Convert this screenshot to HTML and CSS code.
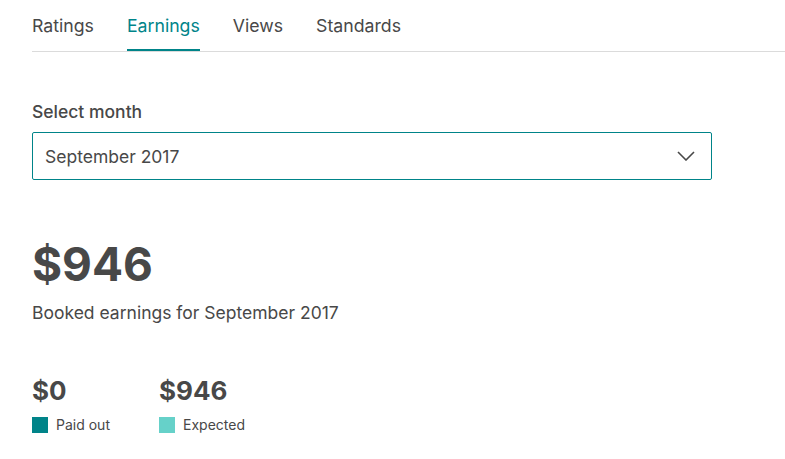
FILE: index.html
```html
<!DOCTYPE html>
<html lang="en">
<head>
  <meta charset="UTF-8">
  <title>Earnings</title>
  <link rel="stylesheet" href="styles.css">
</head>
<body>

  <nav class="tabs">
    <a class="tab">Ratings</a>
    <a class="tab active">Earnings</a>
    <a class="tab">Views</a>
    <a class="tab">Standards</a>
  </nav>

  <section class="month">
    <label class="label" for="monthSelect">Select month</label>
    <div class="select">
      <span id="monthSelect">September 2017</span>
      <svg class="chevron" width="18" height="10" viewBox="0 0 18 10">
        <path d="M1 1 L9 9 L17 1" fill="none" stroke="#484848" stroke-width="1.6"/>
      </svg>
    </div>
  </section>

  <section class="total">
    <div class="amount">$946</div>
    <p class="caption">Booked earnings for September 2017</p>
  </section>

  <section class="split">
    <div class="part">
      <div class="part-amount">$0</div>
      <div class="legend"><span class="swatch paid"></span>Paid out</div>
    </div>
    <div class="part">
      <div class="part-amount">$946</div>
      <div class="legend"><span class="swatch expected"></span>Expected</div>
    </div>
  </section>

</body>
</html>
```

FILE: styles.css
```css
body {
  margin: 0;
  padding: 0 0 0 32px;
  font-family: Inter, "Noto Sans", sans-serif;
  color: #484848;
  background: #fff;
}

.tabs {
  display: flex;
  gap: 33px;
  border-bottom: 1px solid #dbdbdb;
  height: 51px;
}

.tab {
  font-size: 17.7px;
  line-height: 51px;
  box-sizing: border-box;
  height: 51px;
}

.tab.active {
  color: #008489;
  border-bottom: 2px solid #008489;
}

.month {
  padding-top: 48px;
}

.label {
  display: block;
  font-size: 17.5px;
  font-weight: 500;
  line-height: 24px;
  margin-bottom: 8px;
}

.select {
  width: 680px;
  height: 48px;
  box-sizing: border-box;
  border: 1px solid #008489;
  border-radius: 2px;
  display: flex;
  align-items: center;
  justify-content: space-between;
  padding: 0 16px 0 12px;
  font-size: 17.5px;
}

.total {
  padding-top: 56px;
}

.amount {
  font-size: 46px;
  font-weight: 700;
  line-height: 56px;
}

.caption {
  font-size: 17.5px;
  margin: 10px 0 0;
}

.split {
  display: grid;
  grid-template-columns: 127px auto;
  padding-top: 52px;
}

.part-amount {
  font-size: 26px;
  font-weight: 700;
  line-height: 32px;
}

.legend {
  display: flex;
  align-items: center;
  gap: 8px;
  font-size: 14px;
  margin-top: 9px;
}

.swatch {
  width: 16px;
  height: 16px;
}

.swatch.paid {
  background: #008489;
}

.swatch.expected {
  background: #66d1c9;
}
```
